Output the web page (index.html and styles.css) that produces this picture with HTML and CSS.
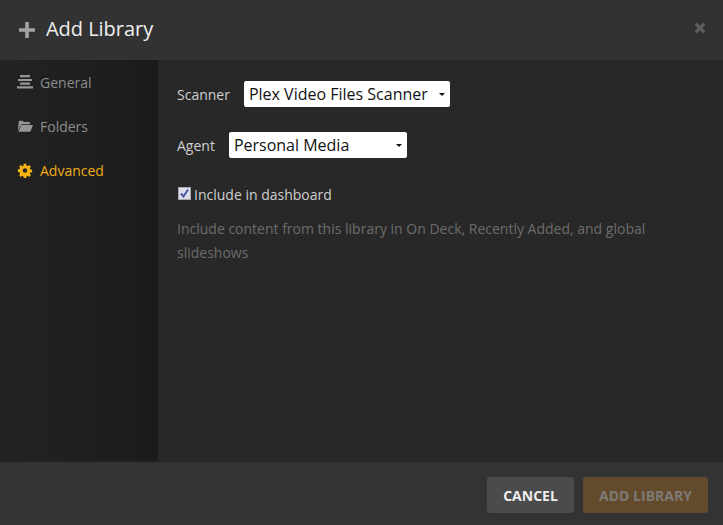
FILE: index.html
```html
<!DOCTYPE html>
<html lang="en">
<head>
<meta charset="utf-8">
<title>Add Library</title>
<link rel="stylesheet" href="styles.css">
</head>
<body>
<div class="modal">
  <header class="head">
    <svg class="plus" viewBox="0 0 16 16" width="16" height="16"><path d="M6.200 0h3.600v6.200H16v3.600H9.800V16H6.200V9.800H0V6.200h6.200z"/></svg>
    <h1 class="title">Add Library</h1>
    <svg class="close" viewBox="0 0 14 14" width="14" height="14"><path d="M1.500 3.800l2.300-2.300L7 4.700l3.200-3.200 2.300 2.300L9.300 7l3.200 3.200-2.300 2.300L7 9.300l-3.200 3.200-2.300-2.300L4.700 7z"/></svg>
  </header>
  <div class="main">
    <nav class="side">
      <a class="item">
        <svg class="ico" viewBox="0 0 16 14" width="16" height="14"><path d="M3 0h10v2.200H3zM1 4h14v2H1zM3 7.500h10v2.200H3zM0 11.200h16v2.300H0z"/></svg>
        <span>General</span>
      </a>
      <a class="item">
        <svg class="ico" viewBox="0 0 18 14" width="18" height="14"><path d="M1 12.500L2 2c.1-.6.500-1 1.200-1h3.300l1.300 1.500h5.700c.7 0 1.200.5 1.200 1.200V5H5z"/><path d="M5 6h13l-3 7.500H1.500z"/></svg>
        <span>Folders</span>
      </a>
      <a class="item active">
        <svg class="ico" viewBox="-1 -1 18 18" width="15" height="15"><path fill-rule="evenodd" d="M6.500 0h3l.4 2.200 1.300.6L13.100 1.500l2 2-1.300 1.900.6 1.300 2.200.4v3l-2.200.4-.6 1.300 1.300 1.900-2 2-1.900-1.300-1.300.6-.4 2.200h-3l-.4-2.200-1.300-.6-1.900 1.300-2-2 1.300-1.900-.6-1.300L-.6 9.600v-3l2.200-.4.600-1.300L.9 3.500l2-2 1.900 1.300 1.300-.6zM8 5.300a2.700 2.700 0 100 5.400 2.700 2.700 0 000-5.400z"/></svg>
        <span>Advanced</span>
      </a>
    </nav>
    <section class="content">
      <div class="field field-scanner">
        <label class="label">Scanner</label>
        <div class="select select-scanner"><span>Plex Video Files Scanner</span><i class="caret"></i></div>
      </div>
      <div class="field field-agent">
        <label class="label">Agent</label>
        <div class="select select-agent"><span>Personal Media</span><i class="caret"></i></div>
      </div>
      <div class="check-row">
        <svg class="check" viewBox="0 0 13 13" width="13" height="13"><rect x=".5" y=".5" width="12" height="12" fill="#dcdfe8" stroke="#a4a7b0"/><path d="M3 6.500l2.500 3L10 2.500" fill="none" stroke="#4a58a4" stroke-width="2"/></svg>
        <span>Include in dashboard</span>
      </div>
      <p class="help">Include content from this library in On Deck, Recently Added, and global slideshows</p>
    </section>
  </div>
  <footer class="foot">
    <button class="btn btn-cancel">CANCEL</button>
    <button class="btn btn-add">ADD LIBRARY</button>
  </footer>
</div>
</body>
</html>
```
FILE: styles.css
```css
* { box-sizing: border-box; }
html, body { margin: 0; height: 100%; }
body { background: #282828; font-family: "Open Sans", "Noto Sans", sans-serif; overflow: hidden; }
.modal { width: 723px; height: 525px; display: flex; flex-direction: column; background: #282828; }
.head { height: 61px; flex: none; display: flex; align-items: center; padding: 0 16px 3px 19px; background: #323232; border-bottom: 1px solid #252525; }
.plus { fill: #a3a3a3; flex: none; margin-right: 11px; margin-top: 2px; }
.title { margin: 0; font-size: 20px; font-weight: 400; color: #eeeeee; flex: 1; line-height: 28px; letter-spacing: -0.03px; }
.close { fill: #5e5e5e; flex: none; margin-bottom: 1px; }
.main { flex: 1; display: flex; min-height: 0; }
.side { width: 158px; flex: none; margin-top: -1px; background: linear-gradient(90deg, #232323 0%, #1b1b1b 100%); box-shadow: inset -1px 0 0 #1a1a1a; }
.item { display: flex; align-items: center; height: 44px; padding-left: 17px; font-size: 14px; color: #8c8c8c; }
.item span { margin-left: 7px; }
.item .ico { fill: #969696; flex: none; width: 16px; }
.item.active { color: #efac16; }
.item.active .ico { fill: #f4b414; }
.content { flex: 1; padding: 20px 0 0 19px; color: #d0d0d0; font-size: 14px; }
.field { display: flex; align-items: center; height: 26px; }
.field-agent { margin-top: 25px; }
.label { margin-right: 14px; color: #cfcfcf; }
.select { position: relative; height: 26px; background: #fff; color: #111; font-size: 16px; line-height: 26px; padding-left: 5px; border-radius: 2px; }
.select-scanner { width: 206px; }
.select-agent { width: 178px; }
.caret { position: absolute; right: 5px; top: 12px; width: 0; height: 0; border-left: 3.500px solid transparent; border-right: 3.500px solid transparent; border-top: 3.500px solid #111; }
.check-row { display: flex; align-items: center; height: 20px; margin-top: 26px; color: #cfcfcf; }
.check { flex: none; margin: 0 3px 2px 1px; }
.help { margin: 13px 50px 0 0; font-size: 14px; line-height: 24px; color: #6c6c6c; }
.foot { height: 64px; flex: none; display: flex; justify-content: flex-end; align-items: flex-start; gap: 9px; padding: 15px 15px 0 0; background: #333333; border-top: 1px solid #242424; }
.btn { height: 36px; border: 0; border-radius: 3px; font-family: inherit; font-size: 14px; font-weight: 700; padding: 0; }
.btn-cancel { width: 87px; background: #4b4b4b; color: #eeeeee; }
.btn-add { width: 125px; background: #634a2b; color: #7d7a75; }
```
